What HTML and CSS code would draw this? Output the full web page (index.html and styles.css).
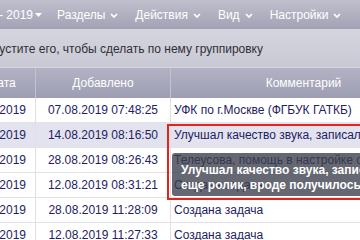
FILE: index.html
```html
<!DOCTYPE html>
<html lang="ru">
<head>
<meta charset="utf-8">
<title>Журнал</title>
<link rel="stylesheet" href="styles.css">
</head>
<body>
<div class="page">
  <nav class="menu">
    <div class="item first">- 2019 <svg class="caret" width="7" height="4" viewBox="0 0 7 4"><path d="M0 0h7L3.5 4z"/></svg></div>
    <div class="item">Разделы <svg class="chev" width="8" height="5" viewBox="0 0 8 5"><path d="M1 1l3 3 3-3"/></svg></div>
    <div class="item">Действия <svg class="chev" width="8" height="5" viewBox="0 0 8 5"><path d="M1 1l3 3 3-3"/></svg></div>
    <div class="item">Вид <svg class="chev" width="8" height="5" viewBox="0 0 8 5"><path d="M1 1l3 3 3-3"/></svg></div>
    <div class="item">Настройки <svg class="chev" width="8" height="5" viewBox="0 0 8 5"><path d="M1 1l3 3 3-3"/></svg></div>
  </nav>
  <div class="group">
    <div class="group-text"><span>Перетащите сюда заголовок столбца и отпустите его, чтобы сделать по нему группировку</span></div>
  </div>
  <div class="grid">
    <div class="row head">
      <div class="cell">Дата</div>
      <div class="cell">Добавлено</div>
      <div class="cell">Комментарий</div>
    </div>
    <div class="row">
      <div class="cell c1">07.08.2019</div>
      <div class="cell c2">07.08.2019 07:48:25</div>
      <div class="cell c3">УФК по г.Москве (ФГБУК ГАТКБ)</div>
    </div>
    <div class="row sel">
      <div class="cell c1">14.08.2019</div>
      <div class="cell c2">14.08.2019 08:16:50</div>
      <div class="cell c3">Улучшал качество звука, записал еще ролик, вроде получилось</div>
    </div>
    <div class="row">
      <div class="cell c1">28.08.2019</div>
      <div class="cell c2">28.08.2019 08:26:43</div>
      <div class="cell c3">Телеусова, помощь в настройке оборудования</div>
    </div>
    <div class="row">
      <div class="cell c1">12.08.2019</div>
      <div class="cell c2">12.08.2019 08:31:21</div>
      <div class="cell c3">Создана задача</div>
    </div>
    <div class="row">
      <div class="cell c1">28.08.2019</div>
      <div class="cell c2">28.08.2019 11:28:09</div>
      <div class="cell c3">Создана задача</div>
    </div>
    <div class="row">
      <div class="cell c1">12.08.2019</div>
      <div class="cell c2">12.08.2019 11:27:33</div>
      <div class="cell c3">Создана задача</div>
    </div>
  </div>
  <div class="mark"></div>
  <div class="tip">Улучшал качество звука, записал еще ролик, вроде получилось</div>
</div>
</body>
</html>
```
FILE: styles.css
```css
html, body {
  margin: 0;
  padding: 0;
  background: #fff;
}
body {
  width: 360px;
  height: 240px;
  overflow: hidden;
  font-family: "Liberation Sans", Arial, sans-serif;
  font-size: 12px;
}
.page {
  position: relative;
  width: 360px;
  height: 240px;
  overflow: hidden;
}
.menu {
  display: flex;
  align-items: center;
  gap: 17px;
  height: 29px;
  padding-top: 1px;
  box-sizing: border-box;
  background: linear-gradient(#bfbfcd, #a2a2b5);
  color: #fff;
  white-space: nowrap;
}
.item {
  display: flex;
  align-items: center;
  gap: 5px;
}
.item.first {
  margin-left: -1px;
  margin-right: -2px;
}
.item .caret {
  fill: #fff;
  margin-left: -3px;
}
.item .chev path {
  fill: none;
  stroke: #fff;
  stroke-width: 1.7;
}
.group {
  height: 38px;
  padding-top: 2px;
  box-sizing: border-box;
  display: flex;
  align-items: center;
  background: linear-gradient(#d5d5df, #c9c9d5);
  color: #2f2f35;
}
.group-text {
  width: 263px;
  display: flex;
  justify-content: flex-end;
  overflow: hidden;
  white-space: nowrap;
}
.grid {
  margin-left: -30px;
}
.row {
  display: grid;
  grid-template-columns: 66px 135px 266px;
  height: 25px;
  box-sizing: border-box;
  border-bottom: 1px solid #e2e2e6;
  color: #1e2262;
}
.row.head {
  height: 31px;
  border-top: 1px solid #d6d6e0;
  border-bottom: none;
  background: linear-gradient(#b2b2c4, #9e9eb3);
  color: #fff;
}
.row.sel {
  background: #e3e3ef;
}
.cell {
  display: flex;
  align-items: center;
  padding: 0 3px;
  border-right: 1px solid #e0e0e4;
  white-space: nowrap;
  overflow: hidden;
}
.head .cell {
  justify-content: center;
  border-right-color: #c2c2d0;
}
.c1 {
  justify-content: flex-end;
  padding-right: 9px;
}
.c2 {
  justify-content: center;
}
.mark {
  position: absolute;
  left: 167px;
  top: 124px;
  width: 220px;
  height: 72px;
  border: 2px solid #e2241c;
}
.tip {
  position: absolute;
  left: 172px;
  top: 153px;
  width: 214px;
  padding: 10px 8px 3px 9px;
  border-radius: 3px;
  background: rgba(58, 62, 74, 0.78);
  color: #fff;
  font-weight: bold;
  line-height: 15px;
}
```
